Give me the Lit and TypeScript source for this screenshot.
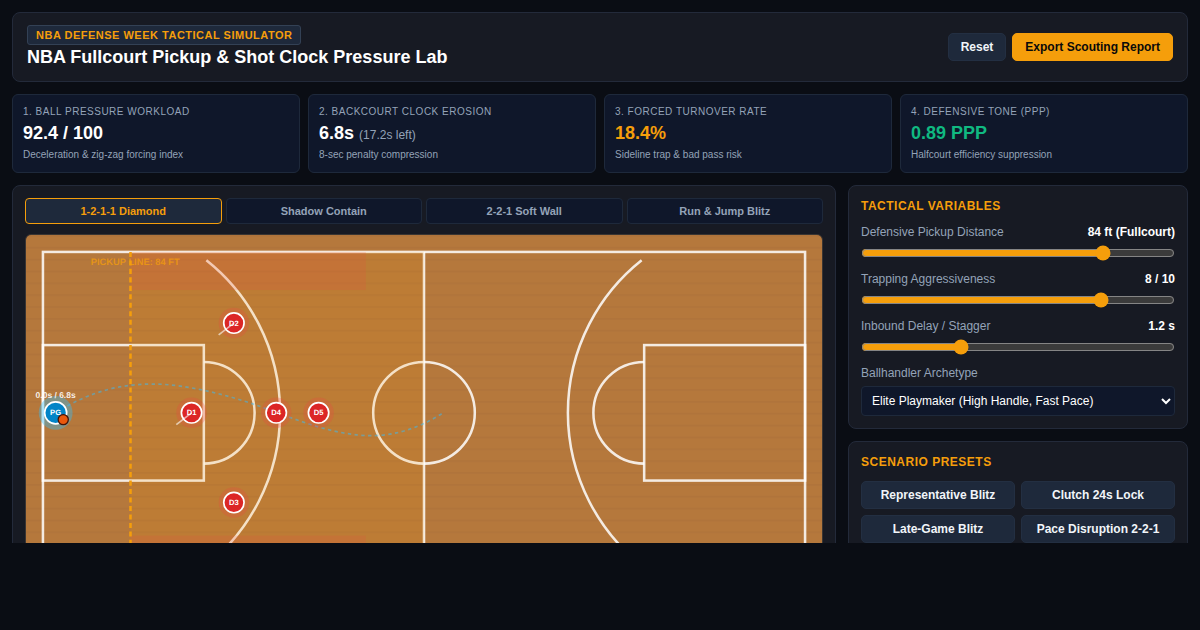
import { LitElement, html, css, svg } from "lit";
import { customElement, state } from "lit/decorators.js";

interface Defender { id: string; x: number; y: number; stance?: boolean }

const METRICS = [
  { label: "1. Ball Pressure Workload", value: "92.4 / 100", extra: "", sub: "Deceleration & zig-zag forcing index", tone: "" },
  { label: "2. Backcourt Clock Erosion", value: "6.8s", extra: "(17.2s left)", sub: "8-sec penalty compression", tone: "" },
  { label: "3. Forced Turnover Rate", value: "18.4%", extra: "", sub: "Sideline trap & bad pass risk", tone: "amber" },
  { label: "4. Defensive Tone (PPP)", value: "0.89 PPP", extra: "", sub: "Halfcourt efficiency suppression", tone: "green" },
];
const SCHEMES = ["1-2-1-1 Diamond", "Shadow Contain", "2-2-1 Soft Wall", "Run & Jump Blitz"];
const PRESETS = ["Representative Blitz", "Clutch 24s Lock", "Late-Game Blitz", "Pace Disruption 2-2-1"];
const DEFENDERS: Defender[] = [
  { id: "D1", x: 195.5, y: 210, stance: true },
  { id: "D2", x: 245.5, y: 104, stance: true },
  { id: "D3", x: 245.5, y: 316 },
  { id: "D4", x: 295.5, y: 210 },
  { id: "D5", x: 345.5, y: 210 },
];

@customElement("court-view")
export class CourtView extends LitElement {
  static styles = css`
    :host { display: block; }
    svg { display: block; width: 100%; height: auto; }
    text { font-family: "Liberation Sans", Arial, sans-serif; font-weight: 700; text-rendering: geometricPrecision; }
    .lines { fill: none; stroke: #fff; stroke-opacity: 0.85; stroke-width: 3; }
    .code { font-size: 9px; fill: #fff; text-anchor: middle; }
    .clock { font-size: 10px; fill: #fff; fill-opacity: 0.9; text-anchor: middle; }
    .pickup { font-size: 11px; fill: #f59e0b; fill-opacity: 0.75; text-anchor: middle; }
  `;

  render() {
    return html`<svg viewBox="0 0 940 420" role="img" aria-label="Fullcourt pickup diagram">
      <defs>
        <pattern id="planks" width="940" height="14" patternUnits="userSpaceOnUse">
          <rect width="940" height="14" fill="#b5783c"></rect>
          <rect width="940" height="2" fill="#b0743b"></rect>
        </pattern>
      </defs>
      <rect width="940" height="420" fill="url(#planks)"></rect>
      <g class="lines">
        <rect x="20" y="20" width="900" height="380"></rect>
        <path d="M470 20V400"></path>
        <circle cx="470" cy="210" r="60"></circle>
        <rect x="20" y="130" width="190" height="160"></rect>
        <rect x="730" y="130" width="190" height="160"></rect>
        <path d="M210 150A60 60 0 0 1 210 270"></path>
        <path d="M730 150A60 60 0 0 0 730 270"></path>
        <path d="M213 29.8A230 230 0 0 1 213 390.2"></path>
        <path d="M727 29.8A230 230 0 0 0 727 390.2"></path>
      </g>
      <rect x="123.4" y="20" width="346.6" height="380" fill="#f59e0b" fill-opacity="0.12"></rect>
      <rect x="123.4" y="20" width="278" height="45" fill="#ef4444" fill-opacity="0.15"></rect>
      <rect x="123.4" y="355" width="278" height="45" fill="#ef4444" fill-opacity="0.15"></rect>
      <text class="pickup" x="129" y="35">PICKUP LINE: 84 FT</text>
      <path d="M123.4 20V400" stroke="#f59e0b" stroke-width="3" stroke-dasharray="6 4"></path>
      <path d="M35 210C75 185 110 176 150 176C190 176 240 190 268 199.5C310 214 360 237 408 237C435 237 465 228 491 211" fill="none" stroke="#38bdf8" stroke-opacity="0.5" stroke-width="2" stroke-dasharray="4 4"></path>
      ${DEFENDERS.map((d) => svg`
        <circle cx=${d.x} cy=${d.y} r="18" fill="#ef4444" fill-opacity="0.25"></circle>
        <circle cx=${d.x} cy=${d.y} r="12" fill="#dc2626" stroke="#fff" stroke-width="2"></circle>
        <text class="code" x=${d.x} y=${d.y + 3}>${d.id}</text>
        ${d.stance ? svg`<path d="M${d.x} ${d.y}l-18 14" stroke="#fff" stroke-opacity="0.6" stroke-width="2"></path>` : ""}`)}
      <circle cx="35" cy="210" r="20" fill="#38bdf8" fill-opacity="0.4"></circle>
      <circle cx="35" cy="210" r="13" fill="#0284c7" stroke="#fff" stroke-width="2"></circle>
      <text class="code" x="35" y="213">PG</text>
      <circle cx="44" cy="218" r="6" fill="#ea580c" stroke="#431407" stroke-width="1.5"></circle>
      <text class="clock" x="35" y="192">0.0s / 6.8s</text>
    </svg>`;
  }
}

@customElement("app-root")
export class AppRoot extends LitElement {
  @state() private scheme = 0;

  static styles = css`
    :host { display: block; min-height: 100vh; background: #0a0d14; color: #f8fafc; font-family: "Liberation Sans", Arial, sans-serif; font-size: 12px; line-height: 16px; }
    * { box-sizing: border-box; }
    h1, h2, p { margin: 0; }
    button, select { font: inherit; }
    .page { display: flex; flex-direction: column; gap: 12px; height: calc(100vh - 87px); padding: 12px 12px 0; overflow: hidden; }
    .page > * { flex: none; }
    .panel { background: #171a23; border: 1px solid #232a3a; border-radius: 8px; }
    .header { display: flex; align-items: center; justify-content: space-between; padding: 12px 14px; }
    .badge { display: inline-block; padding: 2px 8px; border: 1px solid #334155; border-radius: 3px; background: #1e293b; color: #f59e0b; font-size: 11px; line-height: 14px; font-weight: 700; letter-spacing: 0.5px; text-transform: uppercase; }
    .title { font-size: 18px; line-height: 24px; font-weight: 700; color: #fff; }
    .actions { display: flex; gap: 6px; }
    .btn { border: 1px solid #232f42; border-radius: 5px; background: #1e293b; color: #f1f5f9; font-weight: 700; line-height: 14px; padding: 6px 12px; }
    .primary { background: #f59e0b; border-color: #f59e0b; color: #0a0a0a; }
    .metrics { display: grid; grid-template-columns: repeat(4, 1fr); gap: 8px; }
    .metric { background: #0f172a; border: 1px solid #1e293b; border-radius: 6px; padding: 10px; }
    .label { color: #94a3b8; font-size: 10px; line-height: 14px; letter-spacing: 0.5px; text-transform: uppercase; }
    .value { margin: 3px 0; font-size: 18px; line-height: 22px; font-weight: 700; color: #fff; }
    .extra { font-size: 12px; line-height: 12px; font-weight: 400; color: #94a3b8; }
    .sub { color: #94a3b8; font-size: 10px; line-height: 15px; }
    .value.amber { color: #f59e0b; }
    .value.green { color: #10b981; }
    .main { display: grid; grid-template-columns: minmax(0, 1fr) 340px; gap: 12px; align-items: start; }
    .board { padding: 12px; }
    .tabs { display: grid; grid-template-columns: repeat(4, 1fr); gap: 4px; margin-bottom: 10px; }
    .tab { border: 1px solid #1e293b; border-radius: 4px; background: #0f172a; color: #94a3b8; font-size: 11px; line-height: 12px; font-weight: 700; padding: 6px; }
    .tab.active { background: #1e293b; border-color: #f59e0b; color: #f59e0b; }
    .court { border: 1px solid #3a3532; border-radius: 6px; overflow: hidden; }
    .side { display: flex; flex-direction: column; gap: 12px; }
    .card { padding: 12px; }
    .heading { margin-bottom: 11px; font-size: 12px; line-height: 16px; font-weight: 700; letter-spacing: 0.5px; text-transform: uppercase; color: #f59e0b; }
    .fields { display: grid; gap: 11px; }
    .row { display: flex; justify-content: space-between; line-height: 14px; color: #94a3b8; }
    .row output { color: #fff; font-weight: 700; }
    .range { display: block; width: 100%; height: 16px; margin: 6px 0 0; accent-color: #f59e0b; color-scheme: dark; }
    .select { display: block; width: 100%; height: 30px; margin-top: 6px; padding: 6px; border: 1px solid #1e293b; border-radius: 4px; background: #0f172a; color: #fff; }
    .presets { display: grid; grid-template-columns: 1fr 1fr; gap: 6px; }
    .presets .btn { padding: 6px; }
  `;

  private slider(id: string, label: string, shown: string, min: number, max: number, step: number, value: number) {
    return html`<div>
      <div class="row"><label for=${id}>${label}</label><output for=${id}>${shown}</output></div>
      <input class="range" id=${id} type="range" min=${min} max=${max} step=${step} .value=${String(value)}>
    </div>`;
  }

  render() {
    return html`<div class="page">
      <header class="panel header">
        <div>
          <span class="badge">NBA Defense Week Tactical Simulator</span>
          <h1 class="title">NBA Fullcourt Pickup &amp; Shot Clock Pressure Lab</h1>
        </div>
        <div class="actions">
          <button class="btn">Reset</button>
          <button class="btn primary">Export Scouting Report</button>
        </div>
      </header>
      <section class="metrics">
        ${METRICS.map((m) => html`<div class="metric">
          <p class="label">${m.label}</p>
          <p class="value ${m.tone}">${m.value}${m.extra ? html` <span class="extra">${m.extra}</span>` : ""}</p>
          <p class="sub">${m.sub}</p>
        </div>`)}
      </section>
      <main class="main">
        <section class="panel board">
          <div class="tabs">
            ${SCHEMES.map((s, i) => html`<button class="tab ${i === this.scheme ? "active" : ""}" aria-pressed=${i === this.scheme} @click=${() => (this.scheme = i)}>${s}</button>`)}
          </div>
          <div class="court"><court-view></court-view></div>
        </section>
        <aside class="side">
          <section class="panel card">
            <h2 class="heading">Tactical Variables</h2>
            <div class="fields">
              ${this.slider("pickup", "Defensive Pickup Distance", "84 ft (Fullcourt)", 40, 96, 1, 84)}
              ${this.slider("trap", "Trapping Aggressiveness", "8 / 10", 1, 10, 1, 8)}
              ${this.slider("delay", "Inbound Delay / Stagger", "1.2 s", 0.3, 3.2, 0.1, 1.2)}
              <div>
                <div class="row"><label for="archetype">Ballhandler Archetype</label></div>
                <select class="select" id="archetype"><option>Elite Playmaker (High Handle, Fast Pace)</option></select>
              </div>
            </div>
          </section>
          <section class="panel card">
            <h2 class="heading">Scenario Presets</h2>
            <div class="presets">${PRESETS.map((p) => html`<button class="btn">${p}</button>`)}</div>
          </section>
        </aside>
      </main>
    </div>`;
  }
}
